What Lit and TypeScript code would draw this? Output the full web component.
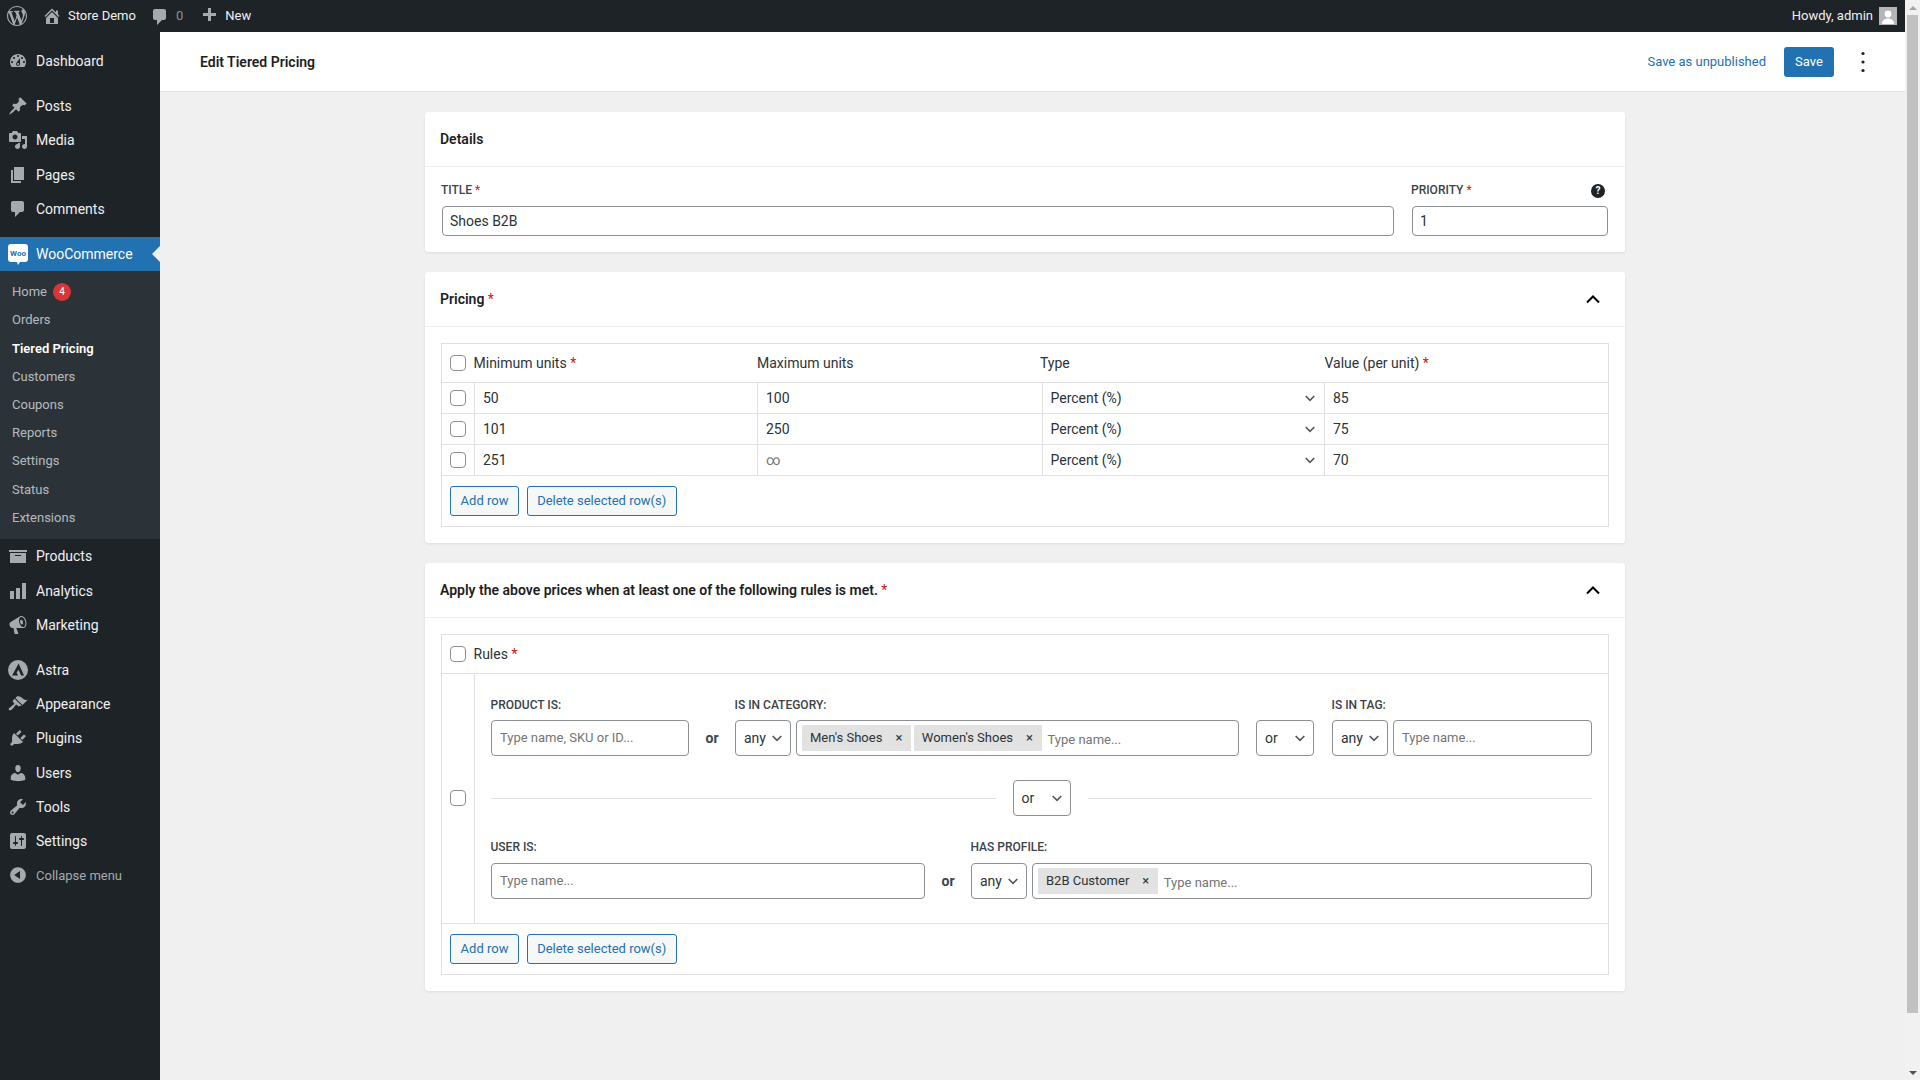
import { LitElement, html, css } from 'lit'
import { customElement } from 'lit/decorators.js'

const ICONS: Record<string, string> = {
	wp: 'M20 10c0-5.51-4.49-10-10-10C4.48 0 0 4.49 0 10c0 5.52 4.48 10 10 10 5.51 0 10-4.48 10-10zM7.78 15.37L4.37 6.22c.55-.02 1.17-.08 1.17-.08.5-.06.44-1.13-.06-1.11 0 0-1.45.11-2.37.11-.18 0-.37 0-.58-.01C4.12 2.69 6.87 1.11 10 1.11c2.33 0 4.45.87 6.05 2.34-.68-.11-1.65.39-1.65 1.58 0 .74.45 1.36.9 2.1.35.61.55 1.36.55 2.46 0 1.49-1.4 5-1.4 5l-3.03-8.37c.54-.02.82-.17.82-.17.5-.05.44-1.25-.06-1.22 0 0-1.44.12-2.38.12-.87 0-2.33-.12-2.33-.12-.5-.03-.56 1.2-.06 1.22l.92.08 1.26 3.41zM17.41 10c.24-.64.74-1.87.43-4.25.7 1.29 1.05 2.71 1.05 4.25 0 3.29-1.73 6.24-4.4 7.78.97-2.59 1.94-5.2 2.92-7.78zM6.1 18.09C3.12 16.65 1.11 13.53 1.11 10c0-1.3.23-2.48.72-3.59C3.25 10.3 4.67 14.2 6.1 18.09zm4.03-6.63l2.58 6.98c-.86.29-1.76.45-2.71.45-.79 0-1.57-.11-2.29-.33.81-2.38 1.62-4.74 2.42-7.1z',
	home: 'M16 8.5l1.53 1.53-1.06 1.06L10 4.62l-6.47 6.47-1.06-1.06L10 2.5l4 4v-2h2v4zm-6-2.46l6 5.99V18H4v-5.97zM12 17v-5H8v5h4z',
	comment: 'M5 2h9c1.1 0 2 .9 2 2v7c0 1.1-.9 2-2 2h-2l-5 5v-5H5c-1.1 0-2-.9-2-2V4c0-1.1.9-2 2-2z',
	plus: 'M17 7v3h-5v5H9v-5H4V7h5V2h3v5h5z',
	dashboard: 'M3.76 16h12.48c1.1-1.37 1.76-3.11 1.76-5 0-4.42-3.58-8-8-8s-8 3.58-8 8c0 1.89.66 3.63 1.76 5zM10 4c.55 0 1 .45 1 1s-.45 1-1 1-1-.45-1-1 .45-1 1-1zM6 6c.55 0 1 .45 1 1s-.45 1-1 1-1-.45-1-1 .45-1 1-1zm8 0c.55 0 1 .45 1 1s-.45 1-1 1-1-.45-1-1 .45-1 1-1zm-5.37 5.55L12 7v6c0 1.1-.9 2-2 2s-2-.9-2-2c0-.57.24-1.08.63-1.45zM4 10c.55 0 1 .45 1 1s-.45 1-1 1-1-.45-1-1 .45-1 1-1zm12 0c.55 0 1 .45 1 1s-.45 1-1 1-1-.45-1-1 .45-1 1-1zm-5 3c0-.55-.45-1-1-1s-1 .45-1 1 .45 1 1 1 1-.45 1-1z',
	post: 'M10.44 3.02l1.82-1.82 6.36 6.35-1.83 1.82c-1.05-.68-2.48-.57-3.41.36l-.75.75c-.92.93-1.04 2.35-.35 3.41l-1.83 1.82-2.41-2.41-2.8 2.79c-.42.42-3.38 2.71-3.8 2.29s1.86-3.39 2.28-3.81l2.79-2.79L4.1 9.36l1.83-1.82c1.05.69 2.48.57 3.4-.36l.75-.75c.93-.92 1.05-2.35.36-3.41z',
	media: 'M13 11V4c0-.55-.45-1-1-1h-1.67L9 1H5L3.67 3H2c-.55 0-1 .45-1 1v7c0 .55.45 1 1 1h10c.55 0 1-.45 1-1zM7 4.5c1.38 0 2.5 1.12 2.5 2.5S8.38 9.5 7 9.5 4.5 8.38 4.5 7 5.62 4.5 7 4.5zM14 6h5v10.5c0 1.38-1.12 2.5-2.5 2.5S14 17.88 14 16.5s1.12-2.5 2.5-2.5c.17 0 .34.02.5.05V9h-3V6zm-4 8.05V13h2v3.5c0 1.38-1.12 2.5-2.5 2.5S7 17.88 7 16.5 8.12 14 9.5 14c.17 0 .34.02.5.05z',
	page: 'M6 15V2h10v13H6zm-1 1h8v2H3V5h2v11z',
	archive: 'M19 4v2H1V4h18zM2 7h16v10H2V7zm11 3V9H7v1h6z',
	chart: 'M18 18V2h-4v16h4zm-6 0V7H8v11h4zm-6 0v-8H2v8h4z',
	megaphone: 'M18.15 5.94c.46 1.62.38 3.22-.02 4.48-.42 1.28-1.26 2.18-2.3 2.48-.16.06-.26.06-.4.06-.06.02-.12.02-.18.02-.06.02-.14.02-.22.02h-6.8l2.22 5.5c.02.14-.06.26-.14.34-.08.1-.24.16-.34.16H6.95c-.1 0-.26-.06-.34-.16-.08-.08-.16-.2-.14-.34l-1-5.5H4.25l-.02-.02c-.5.06-1.08-.18-1.54-.62s-.88-1.08-1.06-1.88c-.24-.8-.2-1.56-.02-2.2.18-.62.58-1.08 1.06-1.3l.02-.02 9-5.4c.1-.06.18-.1.24-.16.06-.04.14-.08.24-.12.16-.08.28-.12.5-.18 1.04-.3 2.24.1 3.22.98s1.84 2.24 2.26 3.86zm-2.58 5.98h-.02c.4-.1.74-.34 1.04-.7.58-.7.86-1.76.86-3.04 0-.64-.1-1.3-.28-1.98-.34-1.36-1.02-2.5-1.78-3.24s-1.68-1.1-2.46-.88c-.82.22-1.4.96-1.7 2-.32 1.04-.28 2.36.06 3.72.38 1.36 1 2.5 1.8 3.24.78.74 1.62 1.1 2.48.88zm-2.54-7.08c.22-.04.42-.02.62.04.38.16.76.48 1.02 1s.42 1.2.42 1.78c0 .3-.04.56-.12.8-.18.48-.44.84-.86.94-.34.1-.8-.06-1.14-.4s-.64-.86-.78-1.5c-.18-.62-.12-1.24.02-1.72s.48-.84.82-.94z',
	astra: 'M10 0a10 10 0 1 0 0 20 10 10 0 0 0 0-20zM10.6 3.6L16 15.6h-2.9l-2.5-5.9-2 2.9 1.3 3H4.1z',
	appearance: 'M14.48 11.06L7.41 3.99l1.5-1.5c.5-.56 2.3-.47 3.51.32 1.21.8 1.43 1.28 2.91 2.1 1.18.64 2.45 1.26 4.45.85zm-.71.71L6.7 4.7 4.93 6.47c-.39.39-.39 1.02 0 1.41l1.06 1.06c.39.39.39 1.03 0 1.42-.6.6-1.43 1.11-2.21 1.69-.35.26-.7.53-1.01.84C1.43 13.23 0 15 1 16s2.77-.4 4.12-1.75c.29-.29.56-.65.82-1.01.58-.78 1.09-1.61 1.69-2.21.39-.39 1.02-.39 1.41 0l1.06 1.06c.39.39 1.02.39 1.41 0z',
	plugin: 'M13.11 4.36L9.87 7.6 8 5.73l3.24-3.24c.35-.34 1.05-.2 1.56.32.52.51.66 1.21.31 1.55zm-8 1.77l.91-1.12 9.01 9.01-1.19.84c-.71.71-2.63 1.16-3.82 1.16H6.14L4.9 17.26c-.59.59-1.54.59-2.12 0-.59-.58-.59-1.53 0-2.12l1.24-1.24v-3.88c0-1.13.4-3.19 1.09-3.89zm7.26 3.97l3.24-3.24c.34-.35 1.04-.21 1.55.31.52.51.66 1.21.31 1.55l-3.24 3.25z',
	users: 'M10 9.25c-2.27 0-2.73-3.44-2.73-3.44C7 4.02 7.82 2 9.97 2c2.16 0 2.98 2.02 2.71 3.81 0 0-.41 3.44-2.68 3.44zm0 2.57L12.72 10c2.39 0 4.52 2.33 4.52 4.53v2.49s-3.65 1.13-7.24 1.13c-3.65 0-7.24-1.13-7.24-1.13v-2.49c0-2.25 1.94-4.48 4.47-4.48z',
	tools: 'M16.68 9.77c-1.34 1.34-3.3 1.67-4.95.99l-5.41 6.52c-.99.99-2.59.99-3.58 0s-.99-2.59 0-3.57l6.52-5.42c-.68-1.65-.35-3.61.99-4.95 1.28-1.28 3.12-1.62 4.72-1.06l-2.89 2.89 2.82 2.82 2.86-2.87c.53 1.58.18 3.39-1.08 4.65zM3.81 16.21c.4.39 1.04.39 1.43 0 .4-.4.4-1.04 0-1.43-.39-.4-1.03-.4-1.43 0-.39.39-.39 1.03 0 1.43z',
	settings: 'M18 16V4c0-1.1-.9-2-2-2H4c-1.1 0-2 .9-2 2v12c0 1.1.9 2 2 2h12c1.1 0 2-.9 2-2zM8 11h1c.55 0 1 .45 1 1s-.45 1-1 1H8v1.5c0 .28-.22.5-.5.5s-.5-.22-.5-.5V13H6c-.55 0-1-.45-1-1s.45-1 1-1h1V5.5c0-.28.22-.5.5-.5s.5.22.5.5V11zm5-2h-1c-.55 0-1-.45-1-1s.45-1 1-1h1V5.5c0-.28.22-.5.5-.5s.5.22.5.5V7h1c.55 0 1 .45 1 1s-.45 1-1 1h-1v5.5c0 .28-.22.5-.5.5s-.5-.22-.5-.5V9z',
	collapse: 'M10 2.16c4.33 0 7.84 3.51 7.84 7.84s-3.51 7.84-7.84 7.84S2.16 14.33 2.16 10 5.71 2.16 10 2.16zm2 11.72V6.12L6.18 9.97z',
}

const SUBMENU = ['Orders', 'Tiered Pricing', 'Customers', 'Coupons', 'Reports', 'Settings', 'Status', 'Extensions']

const TIERS = [
	{ min: '50', max: '100', value: '85' },
	{ min: '101', max: '250', value: '75' },
	{ min: '251', max: '∞', value: '70' },
]

const icon = (name: string) => html`<svg class="dash" viewBox="0 0 20 20"><path d=${ICONS[name]}></path></svg>`

const chevron = html`<svg class="chev" viewBox="0 0 10 7"><polyline points="0.7,1 5,5.4 9.3,1"></polyline></svg>`

const chevronUp = html`<svg class="chev-up" viewBox="0 0 14 9"><polyline points="1,7.5 7,1.5 13,7.5"></polyline></svg>`

const select = (text: string) => html`<div class="select"><span>${text}</span>${chevron}</div>`

const tag = (text: string) => html`<div class="tag"><span>${text}</span><span class="tag-x">×</span></div>`

@customElement('app-root')
export class AppRoot extends LitElement {
	static styles = css`
		:host {
			display: block;
			font-family: Roboto, "Liberation Sans", sans-serif;
			font-size: 14px;
			color: #2c3338;
		}

		* {
			box-sizing: border-box;
		}

		.shell {
			display: flex;
			height: 100vh;
			overflow: hidden;
		}

		.app {
			flex: 1;
			min-width: 0;
			display: flex;
			flex-direction: column;
		}

		/* fake browser scrollbar */
		.scrollbar {
			width: 15px;
			background: #f1f1f1;
			display: flex;
			flex-direction: column;
			align-items: center;
		}

		.sb-btn {
			height: 15px;
			flex: none;
			display: flex;
			align-items: center;
			justify-content: center;
		}

		.sb-up {
			width: 0;
			height: 0;
			border: 4px solid transparent;
			border-top: 0;
			border-bottom: 4px solid #a3a3a3;
		}

		.sb-down {
			width: 0;
			height: 0;
			border: 4px solid transparent;
			border-bottom: 0;
			border-top: 4px solid #505050;
		}

		.sb-thumb {
			width: 11px;
			height: 998px;
			flex: none;
			background: #c1c1c1;
		}

		.sb-fill {
			flex: 1;
		}

		.dash {
			width: 20px;
			height: 20px;
			flex: none;
			display: block;
			fill: #a7aaad;
		}

		/* admin bar */
		.adminbar {
			height: 32px;
			flex: none;
			background: #1d2327;
			color: #f0f0f1;
			font-size: 13px;
			display: flex;
			align-items: center;
			padding: 0 8px 1px 7px;
		}

		.ab-home {
			margin-left: 15px;
		}

		.ab-label {
			margin-left: 6px;
		}

		.ab-comment {
			margin-left: 14px;
			margin-top: 2px;
		}

		.ab-count {
			margin-left: 6px;
			color: #8d9196;
		}

		.ab-plus {
			margin-left: 16px;
		}

		.ab-plus svg {
			margin-top: 1px;
		}

		.ab-new {
			margin-left: 6px;
		}

		.howdy {
			margin-left: auto;
			margin-right: 6px;
		}

		.avatar {
			width: 18px;
			height: 18px;
			display: block;
			margin-top: 1px;
		}

		.body {
			flex: 1;
			display: flex;
			min-height: 0;
		}

		/* sidebar */
		.sidebar {
			width: 160px;
			flex: none;
			background: #1d2327;
			padding-top: 12px;
		}

		.item {
			height: 34.2px;
			display: flex;
			align-items: center;
			padding-left: 8px;
			color: #f0f0f1;
			gap: 8px;
		}

		.item.sep {
			margin-top: 11px;
		}

		.item.active {
			position: relative;
			height: 34px;
			background: #2271b1;
			color: #fff;
		}

		.item.active::after {
			content: "";
			position: absolute;
			right: 0;
			top: 9px;
			border: 8px solid transparent;
			border-left: 0;
			border-right-color: #f0f0f1;
		}

		.woo {
			width: 20px;
			height: 22px;
			flex: none;
			margin-top: 3px;
			display: block;
		}

		.submenu {
			background: #2c3338;
			padding: 6.75px 0 8px;
			font-size: 13px;
			color: rgba(240, 246, 252, 0.7);
		}

		.subitem {
			height: 28.2px;
			display: flex;
			align-items: center;
			padding-left: 12px;
		}

		.subitem.current {
			color: #fff;
			font-weight: 600;
		}

		.badge {
			width: 18px;
			height: 18px;
			margin-left: 6px;
			border-radius: 50%;
			background: #d63638;
			color: #fff;
			font-size: 10px;
			display: flex;
			align-items: center;
			justify-content: center;
		}

		.collapse {
			font-size: 13px;
			color: #a7aaad;
		}

		/* main column */
		.main {
			flex: 1;
			min-width: 0;
			background: #f0f0f0;
			display: flex;
			flex-direction: column;
		}

		.topbar {
			height: 60px;
			flex: none;
			background: #fff;
			border-bottom: 1px solid #e2e4e7;
			display: flex;
			align-items: center;
			padding: 0 30px 0 40px;
			font-size: 13px;
		}

		.topbar h1 {
			margin: 0;
			font-size: 14px;
			font-weight: 600;
			color: #1e1e1e;
		}

		.unpublished {
			margin-left: auto;
			color: #2271b1;
		}

		.save {
			width: 50px;
			height: 30px;
			margin-left: 18px;
			border-radius: 3px;
			background: #2271b1;
			color: #fff;
			display: flex;
			align-items: center;
			justify-content: center;
		}

		.kebab {
			width: 24px;
			height: 24px;
			margin-left: 17px;
			display: block;
			fill: #1e1e1e;
		}

		.content {
			padding: 20px 0 0 265px;
		}

		.card {
			width: 1200px;
			background: #fff;
			border-radius: 3px;
			box-shadow: 0 1px 3px rgba(0, 0, 0, 0.08);
			margin-bottom: 20px;
		}

		.card-head {
			height: 55px;
			border-bottom: 1px solid #f0f0f0;
			display: flex;
			align-items: center;
			justify-content: space-between;
			padding: 0 25px 0 15px;
			font-weight: 600;
			color: #1e1e1e;
		}

		.req {
			color: #cc1818;
			font-weight: 400;
		}

		.chev-up {
			width: 14px;
			height: 9px;
			display: block;
			fill: none;
			stroke: #000;
			stroke-width: 2;
		}

		.card-body {
			padding: 16px;
		}

		.details {
			display: grid;
			grid-template-columns: 1fr 198px;
			gap: 16px;
			padding: 14px 16px 16px;
		}

		.field-label {
			height: 18px;
			margin-bottom: 7px;
			font-size: 12px;
			font-weight: 500;
			line-height: 18px;
			text-transform: uppercase;
			color: #3c434a;
		}

		.priority-label {
			display: flex;
			align-items: center;
			justify-content: space-between;
			padding-right: 4px;
		}

		.help {
			width: 14px;
			height: 14px;
			border-radius: 50%;
			background: #1e2327;
			color: #fff;
			font-size: 10px;
			font-weight: 700;
			display: flex;
			align-items: center;
			justify-content: center;
			margin-top: 1px;
		}

		.text-input {
			height: 30px;
			margin: 0 1px;
			padding: 0 8px 0 7px;
			border: 1px solid #8c8f94;
			border-radius: 4px;
			display: flex;
			align-items: center;
			background: #fff;
		}

		/* repeater tables */
		.table {
			border: 1px solid #e0e0e0;
		}

		.thead {
			height: 39px;
			display: flex;
			align-items: center;
			border-bottom: 1px solid #e0e0e0;
			padding-left: 8px;
		}

		.cols {
			flex: 1;
			display: grid;
			grid-template-columns: 283.5px 283px 284.5px 1fr;
			margin-left: 7.5px;
		}

		.check {
			width: 16px;
			height: 16px;
			flex: none;
			border: 1px solid #8c8f94;
			border-radius: 4px;
			background: #fff;
		}

		.trow {
			height: 31px;
			display: grid;
			grid-template-columns: 32px 283px 285px 282px 1fr;
			border-bottom: 1px solid #e0e0e0;
		}

		.cell {
			display: flex;
			align-items: center;
			border-left: 1px solid #e0e0e0;
			padding: 0 8px;
		}

		.cell.first {
			border-left: 0;
			justify-content: center;
			padding: 0;
		}

		.cell.type {
			justify-content: space-between;
			padding: 0 9px 0 7.5px;
		}

		.infinity {
			color: #757575;
		}

		.chev {
			width: 10px;
			height: 7px;
			flex: none;
			display: block;
			fill: none;
			stroke: #50575e;
			stroke-width: 1.6;
		}

		.actions {
			display: flex;
			gap: 7.5px;
			padding: 10px 8px;
		}

		.btn {
			height: 30px;
			padding: 0 9.6px 1px;
			border: 1px solid #2271b1;
			border-radius: 3px;
			background: #f6f7f7;
			color: #2271b1;
			font-size: 13px;
			display: flex;
			align-items: center;
		}

		.rule-row {
			display: flex;
			height: 250px;
			border-bottom: 1px solid #e0e0e0;
		}

		.rule-check {
			width: 32px;
			flex: none;
			display: flex;
			align-items: center;
			justify-content: center;
			padding-bottom: 1px;
		}

		.rule-main {
			flex: 1;
			min-width: 0;
			border-left: 1px solid #e0e0e0;
			padding: 22px 16px 0;
		}

		.cond {
			display: flex;
			align-items: flex-end;
		}

		.cond .field-label {
			margin-bottom: 6px;
			margin-left: -0.5px;
			white-space: nowrap;
		}

		.cond.lower {
			margin-top: -1px;
		}

		.cond.lower .field-label {
			margin-bottom: 7px;
		}

		.field-narrow {
			width: 198px;
		}

		.field-wide {
			width: 504px;
		}

		.field-user {
			width: 434px;
		}

		.field-rest {
			flex: 1;
			min-width: 0;
		}

		.cond-select {
			margin-left: 17px;
		}

		.tag-field {
			margin-left: 18px;
		}

		.box {
			height: 36px;
			border: 1px solid #8c8f94;
			border-radius: 4px;
			background: #fff;
			display: flex;
			align-items: center;
			padding: 0 8px;
		}

		.placeholder {
			font-size: 13px;
			color: #757575;
			margin-bottom: 1px;
		}

		.or {
			width: 46px;
			height: 36px;
			flex: none;
			display: flex;
			align-items: center;
			justify-content: center;
			font-weight: 700;
			color: #3c434a;
		}

		.select {
			height: 36px;
			width: 58px;
			flex: none;
			padding: 0 8px;
			border: 1px solid #8c8f94;
			border-radius: 4px;
			background: #fff;
			display: flex;
			align-items: center;
			justify-content: space-between;
		}

		.pair {
			display: flex;
			gap: 5px;
		}

		.pair .select {
			width: 56px;
		}

		.pair .box {
			flex: 1;
			min-width: 0;
		}

		.tags {
			padding: 0 5px;
			gap: 3px;
		}

		.tags .placeholder {
			margin: 2px 0 0 3px;
		}

		.tag {
			height: 26px;
			background: #e2e2e2;
			font-size: 13px;
			display: flex;
			align-items: center;
			padding: 0 6px 1px 8px;
			white-space: nowrap;
		}

		.tag-x {
			width: 12px;
			margin-left: 10.5px;
			text-align: center;
			font-size: 13px;
		}

		.divider {
			display: flex;
			align-items: center;
			gap: 17px;
			margin: 24px 0 23px;
		}

		.divider hr {
			flex: 1;
			margin: 0;
			border: 0;
			border-top: 1px solid #e0e0e0;
		}
	`

	render() {
		return html`<div class="shell">
			<div class="app">
				<div class="adminbar">
					${icon('wp')}
					<span class="ab-home">${icon('home')}</span>
					<span class="ab-label">Store Demo</span>
					<span class="ab-comment">${icon('comment')}</span>
					<span class="ab-count">0</span>
					<span class="ab-plus">${icon('plus')}</span>
					<span class="ab-new">New</span>
					<span class="howdy">Howdy, admin</span>
					<svg class="avatar" viewBox="0 0 18 18">
						<rect width="18" height="18" fill="#b5b5b5"></rect>
						<circle cx="9" cy="7" r="3.4" fill="#fff"></circle>
						<path d="M3 17c0-4 2.8-5.500 6-5.500s6 1.500 6 5.500z" fill="#fff"></path>
					</svg>
				</div>
				<div class="body">
					${this.renderSidebar()}
					<div class="main">
						<div class="topbar">
							<h1>Edit Tiered Pricing</h1>
							<span class="unpublished">Save as unpublished</span>
							<div class="save">Save</div>
							<svg class="kebab" viewBox="0 0 24 24">
								<circle cx="12" cy="3.5" r="1.6"></circle>
								<circle cx="12" cy="12" r="1.6"></circle>
								<circle cx="12" cy="20.5" r="1.6"></circle>
							</svg>
						</div>
						<div class="content">
							${this.renderDetails()} ${this.renderPricing()} ${this.renderRules()}
						</div>
					</div>
				</div>
			</div>
			<div class="scrollbar">
				<div class="sb-btn"><div class="sb-up"></div></div>
				<div class="sb-thumb"></div>
				<div class="sb-fill"></div>
				<div class="sb-btn"><div class="sb-down"></div></div>
			</div>
		</div>`
	}

	renderSidebar() {
		const row = (name: string, label: string, sep = false) =>
			html`<div class="item ${sep ? 'sep' : ''}">${icon(name)}<span>${label}</span></div>`

		return html`<nav class="sidebar">
			${row('dashboard', 'Dashboard')}
			${row('post', 'Posts', true)}
			${row('media', 'Media')}
			${row('page', 'Pages')}
			${row('comment', 'Comments')}
			<div class="item sep active">
				<svg class="woo" viewBox="0 0 20 22">
					<path d="M3 0h14a3 3 0 0 1 3 3v12a3 3 0 0 1-3 3h-5l-2 3-1-3H3a3 3 0 0 1-3-3V3a3 3 0 0 1 3-3z" fill="#fff"></path>
					<text x="10" y="11.5" text-anchor="middle" font-size="8" font-weight="700" font-family="Roboto" fill="#2271b1">Woo</text>
				</svg>
				<span>WooCommerce</span>
			</div>
			<div class="submenu">
				<div class="subitem">Home<span class="badge">4</span></div>
				${SUBMENU.map((s) => html`<div class="subitem ${s === 'Tiered Pricing' ? 'current' : ''}">${s}</div>`)}
			</div>
			${row('archive', 'Products')}
			${row('chart', 'Analytics')}
			${row('megaphone', 'Marketing')}
			${row('astra', 'Astra', true)}
			${row('appearance', 'Appearance')}
			${row('plugin', 'Plugins')}
			${row('users', 'Users')}
			${row('tools', 'Tools')}
			${row('settings', 'Settings')}
			<div class="item collapse">${icon('collapse')}<span>Collapse menu</span></div>
		</nav>`
	}

	renderDetails() {
		return html`<section class="card">
			<div class="card-head">Details</div>
			<div class="details">
				<div>
					<div class="field-label">Title <span class="req">*</span></div>
					<div class="text-input">Shoes B2B</div>
				</div>
				<div>
					<div class="field-label priority-label">
						<span>Priority <span class="req">*</span></span>
						<span class="help">?</span>
					</div>
					<div class="text-input">1</div>
				</div>
			</div>
		</section>`
	}

	renderPricing() {
		return html`<section class="card">
			<div class="card-head"><span>Pricing <span class="req">*</span></span>${chevronUp}</div>
			<div class="card-body">
				<div class="table">
					<div class="thead">
						<div class="check"></div>
						<div class="cols">
							<span>Minimum units <span class="req">*</span></span>
							<span>Maximum units</span>
							<span>Type</span>
							<span>Value (per unit) <span class="req">*</span></span>
						</div>
					</div>
					${TIERS.map(
						(t) => html`<div class="trow">
							<div class="cell first"><div class="check"></div></div>
							<div class="cell">${t.min}</div>
							<div class="cell ${t.max === '∞' ? 'infinity' : ''}">${t.max}</div>
							<div class="cell type"><span>Percent (%)</span>${chevron}</div>
							<div class="cell">${t.value}</div>
						</div>`
					)}
					<div class="actions">
						<div class="btn">Add row</div>
						<div class="btn">Delete selected row(s)</div>
					</div>
				</div>
			</div>
		</section>`
	}

	renderRules() {
		return html`<section class="card">
			<div class="card-head">
				<span>Apply the above prices when at least one of the following rules is met. <span class="req">*</span></span>
				${chevronUp}
			</div>
			<div class="card-body">
				<div class="table">
					<div class="thead">
						<div class="check"></div>
						<div class="cols"><span>Rules <span class="req">*</span></span></div>
					</div>
					<div class="rule-row">
						<div class="rule-check"><div class="check"></div></div>
						<div class="rule-main">
							<div class="cond">
								<div class="field-narrow">
									<div class="field-label">Product is:</div>
									<div class="box"><span class="placeholder">Type name, SKU or ID...</span></div>
								</div>
								<div class="or">or</div>
								<div class="field-wide">
									<div class="field-label">Is in category:</div>
									<div class="pair">
										${select('any')}
										<div class="box tags">
											${tag("Men's Shoes")} ${tag("Women's Shoes")}
											<span class="placeholder">Type name...</span>
										</div>
									</div>
								</div>
								<div class="cond-select">${select('or')}</div>
								<div class="field-rest tag-field">
									<div class="field-label">Is in tag:</div>
									<div class="pair">
										${select('any')}
										<div class="box"><span class="placeholder">Type name...</span></div>
									</div>
								</div>
							</div>
							<div class="divider"><hr />${select('or')}<hr /></div>
							<div class="cond lower">
								<div class="field-user">
									<div class="field-label">User is:</div>
									<div class="box"><span class="placeholder">Type name...</span></div>
								</div>
								<div class="or">or</div>
								<div class="field-rest">
									<div class="field-label">Has profile:</div>
									<div class="pair">
										${select('any')}
										<div class="box tags">
											${tag('B2B Customer')}
											<span class="placeholder">Type name...</span>
										</div>
									</div>
								</div>
							</div>
						</div>
					</div>
					<div class="actions">
						<div class="btn">Add row</div>
						<div class="btn">Delete selected row(s)</div>
					</div>
				</div>
			</div>
		</section>`
	}
}
